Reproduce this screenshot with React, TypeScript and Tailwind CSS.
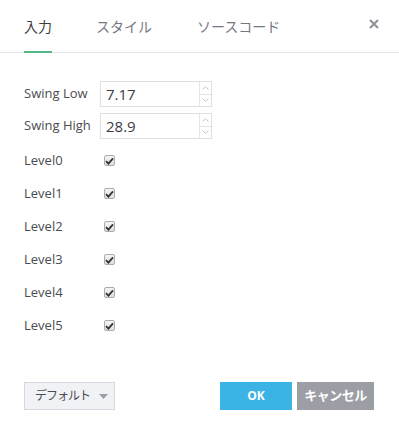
import React from 'react';

const font = { fontFamily: '"Open Sans", "Noto Sans CJK JP", sans-serif' };

const levels = ['Level0', 'Level1', 'Level2', 'Level3', 'Level4', 'Level5'];

const Spinner = () => (
  <div className="flex flex-col w-[12px] h-full border-l border-[#e3e5e9]">
    <div className="flex-1 flex items-center justify-center border-b border-[#e3e5e9]">
      <svg width="7" height="4" viewBox="0 0 7 4" fill="none" stroke="#c2c6cd" strokeWidth="1">
        <path d="M0.5 3.5 L3.5 0.5 L6.5 3.5" />
      </svg>
    </div>
    <div className="flex-1 flex items-center justify-center">
      <svg width="7" height="4" viewBox="0 0 7 4" fill="none" stroke="#c2c6cd" strokeWidth="1">
        <path d="M0.5 0.5 L3.5 3.5 L6.5 0.5" />
      </svg>
    </div>
  </div>
);

const NumberRow = ({ label, value }: { label: string; value: string }) => (
  <div className="flex items-center h-[26px]">
    <span className="w-[76px] text-[13px] text-[#4a4c52]">{label}</span>
    <div className="flex items-stretch w-[112px] h-[26px] border border-[#dcdfe4] bg-white">
      <span className="flex-1 flex items-center pl-[5px] text-[15px] text-[#3a3c42]">{value}</span>
      <Spinner />
    </div>
  </div>
);

const Check = () => (
  <div className="w-[11px] h-[11px] rounded-[2px] border border-[#a9acb2] bg-gradient-to-b from-[#f4f4f4] to-[#dedede] flex items-center justify-center">
    <svg width="9" height="8" viewBox="0 0 9 8">
      <path d="M1 4.2 L3.4 6.6 L8 1.4" fill="none" stroke="#333" strokeWidth="1.8" />
    </svg>
  </div>
);

export default function App() {
  return (
    <div className="w-[399px] h-[435px] bg-white flex flex-col" style={font}>
      <div className="relative flex items-center h-[53px] border-b border-[#e0e3e8] pl-[24px] pr-[20px]">
        <div className="relative h-full flex items-center text-[14px] text-[#3d3f45]">
          入力
          <div className="absolute left-0 right-0 bottom-[-1px] h-[2px] bg-[#53b987]" />
        </div>
        <div className="ml-[44px] h-full flex items-center text-[14px] text-[#757882]">スタイル</div>
        <div className="ml-[45px] h-full flex items-center text-[14px] text-[#757882]">ソースコード</div>
        <div className="ml-auto h-full flex items-center pb-[4px]">
          <svg width="10" height="10" viewBox="0 0 10 10" stroke="#8d9099" strokeWidth="2">
            <path d="M1 1 L9 9 M9 1 L1 9" />
          </svg>
        </div>
      </div>

      <div className="flex flex-col pl-[24px] pt-[28px]">
        <NumberRow label="Swing Low" value="7.17" />
        <div className="h-[6px]" />
        <NumberRow label="Swing High" value="28.9" />
        <div className="flex flex-col mt-[5px]">
          {levels.map((l) => (
            <div key={l} className="flex items-center h-[33px]">
              <span className="w-[80px] text-[13px] text-[#4a4c52]">{l}</span>
              <Check />
            </div>
          ))}
        </div>
      </div>

      <div className="mt-auto mb-[25px] flex items-center px-[24px]">
        <button className="flex items-center whitespace-nowrap h-[28px] w-[91px] pl-[10px] bg-[#f1f2f5] border border-[#d6d9de] text-[12px] tracking-[-1px] text-[#4a4c52]">
          デフォルト
          <svg className="ml-[9px]" width="9" height="5" viewBox="0 0 9 5">
            <path d="M0 0 L9 0 L4.5 5 Z" fill="#9a9da5" />
          </svg>
        </button>
        <button className="ml-auto h-[28px] w-[72px] bg-[#3bb3e4] text-white text-[12px] font-bold">OK</button>
        <button className="ml-[5px] mr-[1px] h-[28px] w-[77px] bg-[#9c9ea6] text-white text-[13px] font-bold whitespace-nowrap tracking-[-0.5px]">キャンセル</button>
      </div>
    </div>
  );
}
